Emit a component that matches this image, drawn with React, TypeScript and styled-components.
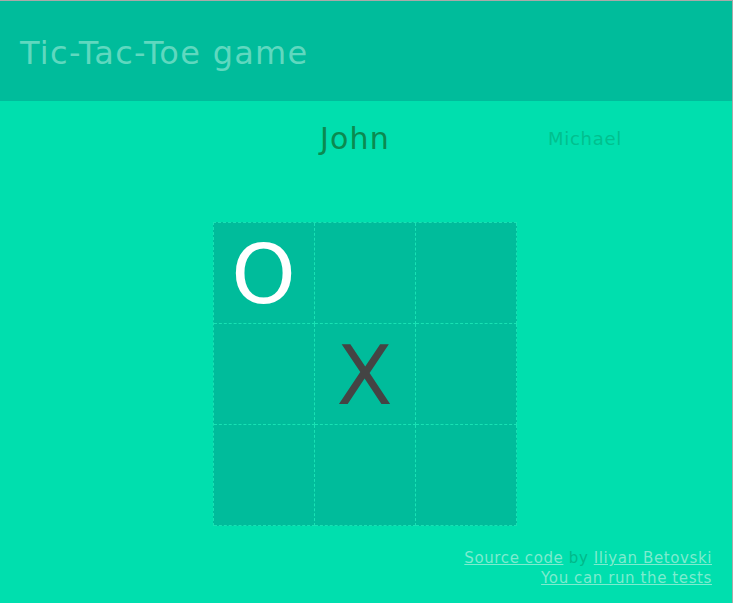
import styled, { createGlobalStyle } from 'styled-components';

const GlobalStyle = createGlobalStyle`
  html, body {
    margin: 0;
    padding: 0;
    background: #00dfae;
  }
  body {
    font-family: 'DejaVu Sans', Verdana, sans-serif;
    border-top: 1px solid #a9a9a9;
    border-right: 1px solid #a9a9a9;
    min-height: 602px;
    box-sizing: border-box;
  }
`;

const Page = styled.div`
  display: flex;
  flex-direction: column;
  min-height: 602px;
`;

const Header = styled.header`
  height: 100px;
  background: #00bc9b;
  display: flex;
  align-items: center;
  padding: 3px 20px 0;
  box-sizing: border-box;
`;

const Title = styled.h1`
  margin: 0;
  font-size: 32px;
  letter-spacing: 0.04em;
  font-weight: normal;
  color: #5fd8bf;
`;

const Players = styled.div`
  display: grid;
  grid-template-columns: 240px 230px 230px;
  align-items: center;
  height: 74px;
`;

const Player = styled.div<{ $active?: boolean }>`
  grid-column: ${(p) => (p.$active ? 2 : 3)};
  text-align: center;
  letter-spacing: 0.04em;
  font-size: ${(p) => (p.$active ? '30px' : '18px')};
  color: ${(p) => (p.$active ? '#0b8a50' : '#00c08e')};
`;

const BoardWrap = styled.div`
  display: flex;
  justify-content: center;
  padding-top: 47px;
  padding-right: 3px;
`;

const Board = styled.div`
  display: grid;
  grid-template-columns: repeat(3, 101px);
  grid-template-rows: repeat(3, 101px);
  border-left: 1px dashed #18e2b4;
  border-top: 1px dashed #18e2b4;
  background: #00bc9b;
`;

const Cell = styled.div<{ $mark?: 'X' | 'O' }>`
  border-right: 1px dashed #18e2b4;
  border-bottom: 1px dashed #18e2b4;
  display: flex;
  align-items: center;
  justify-content: center;
  padding-top: 4px;
  font-size: 82px;
  line-height: 1;
  color: ${(p) => (p.$mark === 'O' ? '#ffffff' : '#444444')};
`;

const Footer = styled.footer`
  margin-top: auto;
  padding: 0 20px 15px;
  text-align: right;
  font-size: 15px;
  letter-spacing: 0.04em;
  line-height: 20px;
  color: #00b98a;
`;

const Link = styled.a`
  color: #7deccf;
  text-decoration: underline;
`;

const cells: (undefined | 'X' | 'O')[] = ['O', undefined, undefined, undefined, 'X', undefined, undefined, undefined, undefined];

export default function App() {
  return (
    <Page>
      <GlobalStyle />
      <Header>
        <Title>Tic-Tac-Toe game</Title>
      </Header>
      <Players>
        <Player $active>John</Player>
        <Player>Michael</Player>
      </Players>
      <BoardWrap>
        <Board>
          {cells.map((mark, i) => (
            <Cell key={i} $mark={mark}>
              {mark}
            </Cell>
          ))}
        </Board>
      </BoardWrap>
      <Footer>
        <div>
          <Link href='#'>Source code</Link> by <Link href='#'>Iliyan Betovski</Link>
        </div>
        <div>
          <Link href='#'>You can run the tests</Link>
        </div>
      </Footer>
    </Page>
  );
}
